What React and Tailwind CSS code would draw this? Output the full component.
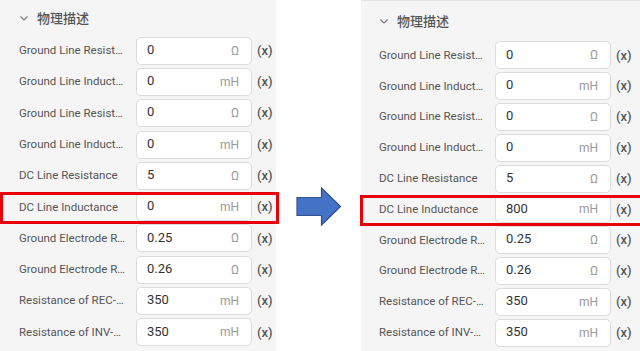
import React from "react";

const OHM = "Ω";

const leftRows = [
  { label: "Ground Line Resist…", value: "0", unit: OHM },
  { label: "Ground Line Induct…", value: "0", unit: "mH" },
  { label: "Ground Line Resist…", value: "0", unit: OHM },
  { label: "Ground Line Induct…", value: "0", unit: "mH" },
  { label: "DC Line Resistance", value: "5", unit: OHM },
  { label: "DC Line Inductance", value: "0", unit: "mH", hit: true },
  { label: "Ground Electrode R…", value: "0.25", unit: OHM },
  { label: "Ground Electrode R…", value: "0.26", unit: OHM },
  { label: "Resistance of REC-…", value: "350", unit: "mH" },
  { label: "Resistance of INV-…", value: "350", unit: "mH" },
];

// same list, after the edit
const rightRows = leftRows.map((r) => (r.hit ? { ...r, value: "800" } : r));

const Chevron = () => (
  <svg width="10" height="10" viewBox="0 0 10 10" className="text-[#777]">
    <path d="M1.5 3.5 L5 7 L8.5 3.5" fill="none" stroke="currentColor" strokeWidth="1.1" />
  </svg>
);

const Row = ({ row, rowH, labelW }) => (
  <div className={`relative flex items-center ${rowH}`}>
    {row.hit && (
      <div className="absolute -left-[19px] -right-[3px] top-[1px] bottom-[-1px] border-[3px] border-[#e8000b]"></div>
    )}
    <span className={`${labelW} shrink-0 text-[11.5px] text-[#555] whitespace-nowrap overflow-hidden`}>
      {row.label}
    </span>
    <div className="flex items-center w-[116px] h-[28px] bg-white border border-[#dcdcdc] rounded-[5px] pl-[10px] pr-[12px]">
      <span className="flex-1 text-[13px] text-[#333] -mt-[2px]">{row.value}</span>
      <span className="text-[12px] text-[#9a9a9a]">{row.unit}</span>
    </div>
    <span className="ml-[5px] text-[13px] font-medium text-[#555]">(x)</span>
  </div>
);

const Panel = ({ rows, className, headerCls, rowH, labelW }) => (
  <div className={`bg-[#f5f5f5] h-full ${className}`}>
    <div className={`flex items-center gap-[8px] ${headerCls}`}>
      <Chevron />
      <span
        className="text-[13px] font-medium text-[#555]"
        style={{ fontFamily: '"Noto Sans CJK SC", sans-serif' }}
      >
        物理描述
      </span>
    </div>
    <div className="flex flex-col">
      {rows.map((r, i) => (
        <Row key={i} row={r} rowH={rowH} labelW={labelW} />
      ))}
    </div>
  </div>
);

export default function App() {
  return (
    <div
      className="flex w-[640px] h-[351px] bg-white overflow-hidden"
      style={{ fontFamily: "Roboto, 'Liberation Sans', sans-serif" }}
    >
      <Panel
        rows={leftRows}
        className="w-[276px] pl-[19px]"
        headerCls="h-[35px] pt-[1px]"
        rowH="h-[31.3px]"
        labelW="w-[117px]"
      />
      <div className="flex-1 flex items-center justify-center pt-[62px]">
        <svg width="46" height="40" viewBox="0 0 46 40">
          <path
            d="M1 10.5 H25.5 V1 L44.5 19.5 L25.5 38 V28.5 H1 Z"
            fill="#4472c4"
            stroke="#2f528f"
            strokeWidth="1.2"
          />
        </svg>
      </div>
      <Panel
        rows={rightRows}
        className="w-[279px] pl-[18px] border-t border-[#e3e3e3]"
        headerCls="h-[39px]"
        rowH="h-[30.8px]"
        labelW="w-[116px]"
      />
    </div>
  );
}
